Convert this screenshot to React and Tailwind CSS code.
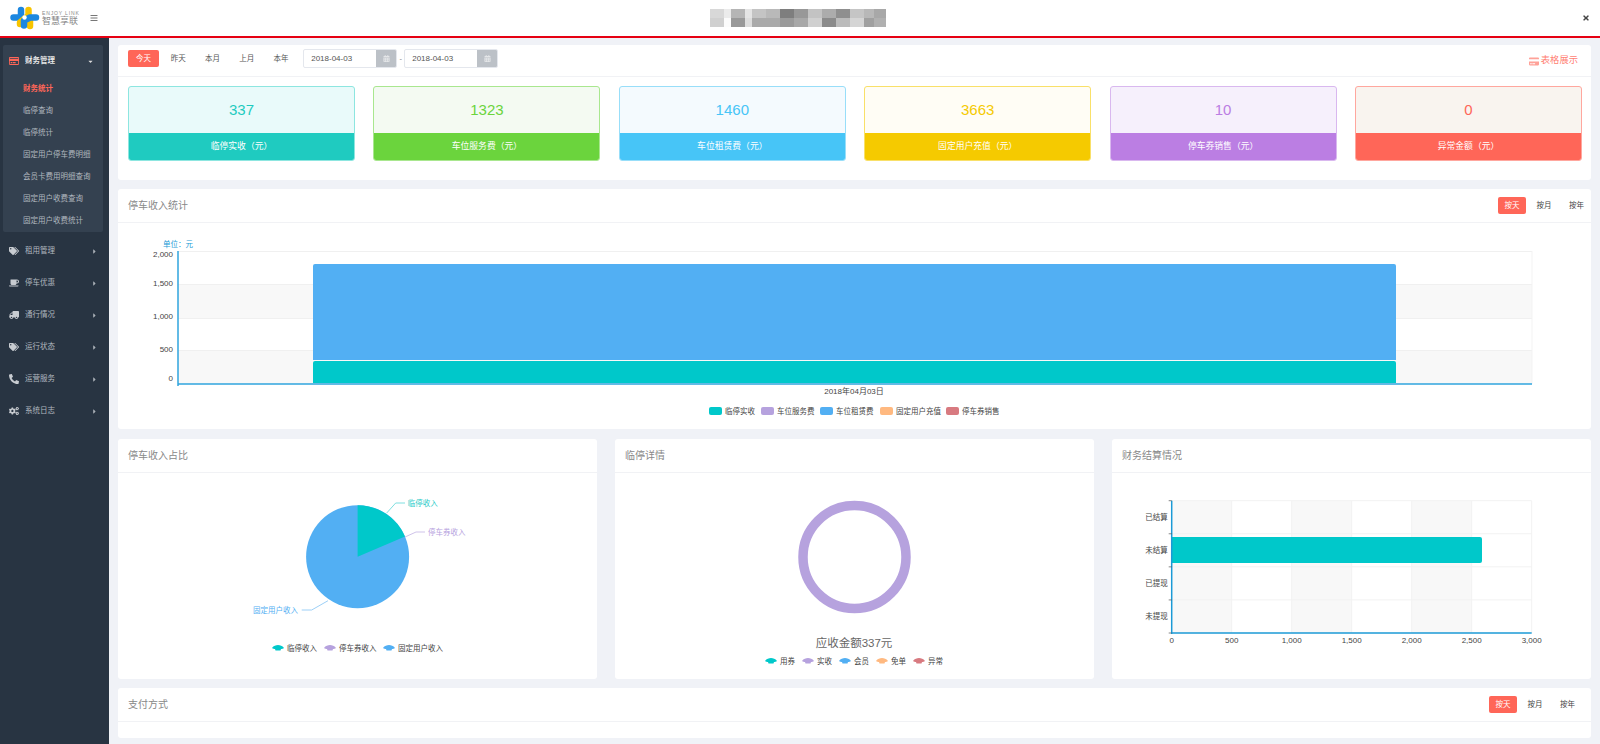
import React from "react";
import { FaRegCreditCard, FaCreditCard, FaTags, FaCoffee, FaTruck, FaPhoneAlt, FaCogs, FaCaretDown, FaCaretRight, FaBars, FaTimes, FaCalendarAlt } from "react-icons/fa";

const font = { fontFamily: '"Liberation Sans","Noto Sans CJK SC",sans-serif' };
const ff = '"Liberation Sans","Noto Sans CJK SC",sans-serif';

function Logo() {
  return (
    <svg width="30" height="24" viewBox="0 0 30 24" className="shrink-0">
      <g fill="none" strokeLinecap="round" strokeLinejoin="round" strokeWidth="6.5">
        <path d="M3.5 11.5H11V4" stroke="#1c87e0" />
        <path d="M18.5 4V9.5L10 16.5V18" stroke="#f7c400" />
        <path d="M20 13V20" stroke="#f7c400" />
        <path d="M14 19.5V14.5L20 11.5H26" stroke="#1c87e0" />
      </g>
      <circle cx="14.5" cy="11.5" r="2.2" fill="#ffffff" />
    </svg>
  );
}

const blurCells = [
  [0,0,"#d8d8d8"],[14,0,"#ebebeb"],[0,1,"#d0d0d0"],[14,1,"#fbfbfb"],[21,0,"#b5b5b5"],[21,1,"#999999"],[35,0,"#e4e4e4"],[35,1,"#dddddd"],
  [42,0,"#c4c4c4"],[42,1,"#aaaaaa"],[56,0,"#b9b9b9"],[56,1,"#aaaaaa"],[70,0,"#7e7e7e"],[70,1,"#9a9a9a"],[84,0,"#989898"],[84,1,"#a8a8a8"],
  [98,0,"#c3c3c3"],[98,1,"#d0d0d0"],[112,0,"#acacac"],[112,1,"#8b8b8b"],[126,0,"#8f8f8f"],[126,1,"#bbbbbb"],[140,0,"#c5c5c5"],[140,1,"#d5d5d5"],
  [154,0,"#b8b8b8"],[154,1,"#a0a0a0"],[164,0,"#a8a8a8"],[164,1,"#b0b0b0"],
];

function Header() {
  return (
    <header className="h-[38px] shrink-0 bg-white border-b-2 border-[#e60012] flex items-center justify-between pl-[10px] pr-[10px]">
      <div className="flex items-center w-[200px]">
        <Logo />
        <div className="ml-[2px] w-[38px] flex flex-col leading-none">
          <span className="text-[5px] tracking-[0.85px] whitespace-nowrap text-[#888888]">ENJOY LINK</span>
          <span className="text-[9px] mt-[1px] text-[#888888]">智慧享联</span>
        </div>
        <FaBars className="ml-[10px] text-[#777777]" size={8} />
      </div>
      <svg width="176" height="18" viewBox="0 0 176 18" className="shrink-0 -ml-[4px]">
        {blurCells.map(([x, r, c], i) => (
          <rect key={i} x={x} y={r * 9} width="14" height="9" fill={c} />
        ))}
      </svg>
      <div className="w-[200px] flex justify-end">
        <FaTimes className="text-[#444444]" size={8} />
      </div>
    </header>
  );
}

const subItems = ["财务统计", "临停查询", "临停统计", "固定用户停车费明细", "会员卡费用明细查询", "固定用户收费查询", "固定用户收费统计"];
const menu = [
  ["租用管理", FaTags, ""],
  ["停车优惠", FaCoffee, ""],
  ["通行情况", FaTruck, "-scale-x-100"],
  ["运行状态", FaTags, ""],
  ["运营服务", FaPhoneAlt, ""],
  ["系统日志", FaCogs, ""],
];

function Sidebar() {
  return (
    <aside className="w-[109px] shrink-0 bg-[#283442] pt-[7px] px-[3px]">
      <div className="bg-[#344150] rounded-[2px] w-[100px] h-[187px] pt-[4px]">
        <div className="h-[22px] mt-[1px] flex items-center pl-[6px] pr-[9px] text-white text-[7.5px]">
          <FaRegCreditCard className="text-[#ff6658] w-[10px] h-[10px]" />
          <span className="ml-[6px] font-bold text-[#e6e6e6]">财务管理</span>
          <FaCaretDown className="ml-auto text-[#dddddd]" size={7} />
        </div>
        <div className="mt-[6px]">
          {subItems.map((t, i) => (
            <div key={t} className={`h-[22px] flex items-center pl-[20px] text-[7.5px] ${i === 0 ? "text-[#ff6658] font-bold" : "text-[#b0b7bf]"}`}>
              {t}
            </div>
          ))}
        </div>
      </div>
      <div className="mt-[3px]">
        {menu.map(([t, Icon, cls]) => (
          <div key={t} className="h-[32px] flex items-center pl-[6px] pr-[8px] text-[7.5px] text-[#b0b7bf]">
            <Icon className={`w-[10px] h-[10px] text-[#c8ccd1] ${cls}`} />
            <span className="ml-[6px]">{t}</span>
            <FaCaretRight className="ml-auto text-[#aab0b7]" size={7} />
          </div>
        ))}
      </div>
    </aside>
  );
}

const stats = [
  ["337", "临停实收（元）", "text-[#1fcbc0]", "bg-[#e9fafa]", "bg-[#1fcbc0]", "border-[#8de6e0]"],
  ["1323", "车位服务费（元）", "text-[#6bd43d]", "bg-[#f4faf2]", "bg-[#6bd43d]", "border-[#a9e78f]"],
  ["1460", "车位租赁费（元）", "text-[#47c5f7]", "bg-[#f4fafe]", "bg-[#47c5f7]", "border-[#98def9]"],
  ["3663", "固定用户充值（元）", "text-[#f5ca00]", "bg-[#fffdf5]", "bg-[#f5ca00]", "border-[#f9e069]"],
  ["10", "停车券销售（元）", "text-[#bb7ee3]", "bg-[#f6f0fc]", "bg-[#bb7ee3]", "border-[#d9b8ef]"],
  ["0", "异常金额（元）", "text-[#ff6658]", "bg-[#f9f4ef]", "bg-[#ff6658]", "border-[#ffa79e]"],
];

function DateInput() {
  return (
    <div className="w-[94px] h-[19px] flex rounded-[2px] border border-[#e4e7ed] bg-white overflow-hidden">
      <span className="flex-1 text-[8px] text-[#555555] flex items-center pl-[7px]">2018-04-03</span>
      <span className="w-[20px] bg-[#bcc1c7] flex items-center justify-center">
        <FaCalendarAlt className="text-[#e4e6e8]" size={7} />
      </span>
    </div>
  );
}

function TopCard() {
  return (
    <section className="bg-white rounded-[3px] h-[135px] shrink-0">
      <div className="h-[32px] border-b border-[#f1f2f5] flex items-center pl-[10px] pr-[13px]">
        <div className="flex items-center mb-[4px]">
          <span className="w-[31px] h-[17px] rounded-[2px] bg-[#ff6658] text-white text-[7.5px] flex items-center justify-center">今天</span>
          <div className="flex ml-[2px]">
            {["昨天", "本月", "上月", "本年"].map((t) => (
              <span key={t} className="w-[34.3px] text-center text-[7.5px] text-[#555555]">{t}</span>
            ))}
          </div>
          <span className="ml-[5px]"><DateInput /></span>
          <span className="w-[7px] text-center text-[7.5px] text-[#888888]">-</span>
          <DateInput />
        </div>
        <span className="ml-auto flex items-center text-[9.3px] text-[#ff7f74] mt-[1px]">
          <FaCreditCard className="mr-[2px] w-[10px] h-[9px] text-[#ffa198]" />
          表格展示
        </span>
      </div>
      <div className="grid grid-cols-6 gap-x-[18.4px] pl-[10px] pr-[9px] pt-[9px]">
        {stats.map(([v, l, tc, bg, bar, bd]) => (
          <div key={l} className={`h-[75px] rounded-[3px] border overflow-hidden flex flex-col ${bd} ${bg}`}>
            <div className={`flex-1 flex items-center justify-center text-[15px] ${tc}`}>{v}</div>
            <div className={`h-[27px] flex items-center justify-center text-white text-[8.8px] ${bar}`}>{l}</div>
          </div>
        ))}
      </div>
    </section>
  );
}

function RangeBtns() {
  return (
    <div className="flex items-center">
      <span className="w-[28px] h-[17px] rounded-[2px] bg-[#ff6658] text-white text-[7.5px] flex items-center justify-center">按天</span>
      <span className="w-[36px] text-center text-[7.5px] text-[#444444]">按月</span>
      <span className="w-[29px] text-center text-[7.5px] text-[#444444]">按年</span>
    </div>
  );
}

function PanelHead({ title, children, pr = "pr-0" }) {
  return (
    <div className={`h-[34px] shrink-0 border-b border-[#f1f2f5] flex items-center justify-between pl-[10px] ${pr}`}>
      <span className="text-[10px] text-[#888888]">{title}</span>
      {children}
    </div>
  );
}

const T = ({ x, y, a = "middle", s = 8, c = "#444444", children }) => (
  <text x={x} y={y} textAnchor={a} fontSize={s} fill={c} fontFamily={ff}>{children}</text>
);

function MainChart() {
  const X = (x) => x - 118;
  const Y = (y) => y - 223;
  const L = X(178), R = X(1532);
  const grid = [251, 284, 318, 350];
  const ticks = [["2,000", 257], ["1,500", 286], ["1,000", 319], ["500", 352], ["0", 381]];
  const legend = [["临停实收", "#00c8ca", 709], ["车位服务费", "#b6a2de", 761], ["车位租赁费", "#52aff3", 820], ["固定用户充值", "#ffb980", 880], ["停车券销售", "#d87a80", 946]];
  return (
    <svg width="1473" height="206" viewBox="0 0 1473 206" className="block">
      <rect x={L} y={Y(284)} width={R - L} height="34" fill="#f8f8f8" />
      <rect x={L} y={Y(350)} width={R - L} height="34" fill="#f8f8f8" />
      {grid.map((y) => <line key={y} x1={L} x2={R} y1={Y(y) + 0.5} y2={Y(y) + 0.5} stroke="#f0f0f0" />)}
      <line x1={R} x2={R} y1={Y(251)} y2={Y(384)} stroke="#f3f3f3" />
      <path d={`M${X(313)} ${Y(360)}V${Y(266)}a2 2 0 0 1 2 -2H${X(1394)}a2 2 0 0 1 2 2V${Y(360)}z`} fill="#52aff3" />
      <path d={`M${X(313)} ${Y(383)}V${Y(363)}a2 2 0 0 1 2 -2H${X(1394)}a2 2 0 0 1 2 2V${Y(383)}z`} fill="#00c8ca" />
      <line x1={L} x2={L} y1={Y(251)} y2={Y(386)} stroke="#2fa5de" strokeWidth="1.5" />
      <line x1={L} x2={R} y1={Y(384)} y2={Y(384)} stroke="#2fa5de" strokeWidth="1.5" />
      {ticks.map(([v, y]) => (
        <T key={v} x={X(173)} y={Y(y)} a="end" s="8">{v}</T>
      ))}
      <T x={X(163)} y={Y(247)} a="start" s="7.5" c="#1b9ad6">单位：元</T>
      <T x={X(854)} y={Y(394)} s="8">2018年04月03日</T>
      {legend.map(([t, c, x]) => (
        <g key={t}>
          <rect x={X(x)} y={Y(407)} width="13" height="8" rx="2" fill={c} />
          <T x={X(x + 16)} y={Y(414)} a="start" s="7.5">{t}</T>
        </g>
      ))}
    </svg>
  );
}

function Blob({ x, y, c }) {
  return (
    <path transform={`translate(${x} ${y})`} d="M0 3C1.5 .8 4 0 6 0s4.5 .8 6 3c-1 .8-2 1-3 1l-.5 1.5h-5L3 4C2 4 1 3.8 0 3z" fill={c} />
  );
}

function PieChart() {
  const cx = 239.6, cy = 83.7, r = 51.5;
  const a = (67 * Math.PI) / 180;
  const ex = cx + r * Math.sin(a), ey = cy - r * Math.cos(a);
  return (
    <svg width="479" height="206" viewBox="0 0 479 206" className="block">
      <circle cx={cx} cy={cy} r={r} fill="#52aff3" />
      <path d={`M${cx} ${cy}V${cy - r}A${r} ${r} 0 0 1 ${ex} ${ey}z`} fill="#00c8ca" />
      <path d="M268.7 40L277.7 30H287" fill="none" stroke="#7fdfe0" />
      <path d="M287 64L298 59H307" fill="none" stroke="#cfc3ea" />
      <path d="M210 127.7L193.7 137H183.7" fill="none" stroke="#9dd0f7" />
      <T x={289.7} y={33} a="start" s="7.5" c="#1fcbc8">临停收入</T>
      <T x={310} y={62} a="start" s="7.5" c="#b6a2de">停车券收入</T>
      <T x={135} y={140} a="start" s="7.5" c="#52aff3">固定用户收入</T>
      <Blob x={154} y={172} c="#00c8ca" />
      <T x={169} y={178} a="start" s="7.5">临停收入</T>
      <Blob x={206} y={172} c="#b6a2de" />
      <T x={221} y={178} a="start" s="7.5">停车券收入</T>
      <Blob x={265} y={172} c="#52aff3" />
      <T x={280} y={178} a="start" s="7.5">固定用户收入</T>
    </svg>
  );
}

function DonutChart() {
  const items = [["用券", "#00c8ca", 150], ["实收", "#b6a2de", 187], ["会员", "#52aff3", 224], ["免单", "#ffb980", 261], ["异常", "#d87a80", 298]];
  return (
    <svg width="478" height="206" viewBox="0 0 478 206" className="block">
      <circle cx="239.5" cy="84" r="51.5" fill="none" stroke="#b6a2de" strokeWidth="9.5" />
      <T x={239} y={174} s="11.5" c="#666666">应收金额337元</T>
      {items.map(([t, c, x]) => (
        <g key={t}>
          <Blob x={x} y={185} c={c} />
          <T x={x + 15} y={191} a="start" s="7.5">{t}</T>
        </g>
      ))}
    </svg>
  );
}

function BarChart() {
  const L = 59.7, R = 419.7, Tp = 27.7, B = 160;
  const step = (R - L) / 6, row = (B - Tp) / 4;
  return (
    <svg width="479" height="206" viewBox="0 0 479 206" className="block">
      {[0, 2, 4].map((i) => <rect key={i} x={L + i * step} y={Tp} width={step} height={B - Tp} fill="#f8f8f8" />)}
      {[0, 1, 2, 3, 4, 5, 6].map((i) => <line key={i} x1={L + i * step} x2={L + i * step} y1={Tp} y2={B} stroke="#f2f2f2" />)}
      {[0, 1, 2, 3].map((i) => <line key={i} x1={L} x2={R} y1={Tp + i * row} y2={Tp + i * row} stroke="#f2f2f2" />)}
      <path d={`M${L} 64H368a2 2 0 0 1 2 2V88a2 2 0 0 1 -2 2H${L}z`} fill="#00c8ca" />
      <line x1={L} x2={L} y1={Tp} y2={B + 1} stroke="#1b9ad6" strokeWidth="1.5" />
      <line x1={L} x2={R} y1={B} y2={B} stroke="#1b9ad6" strokeWidth="1.5" />
      {[0, 1, 2, 3, 4].map((i) => <line key={i} x1={L - 3} x2={L} y1={Tp + i * row} y2={Tp + i * row} stroke="#555555" strokeWidth=".7" />)}
      {["已结算", "未结算", "已提现", "未提现"].map((t, i) => (
        <T key={t} x={L - 4} y={Tp + (i + 0.5) * row + 3} a="end" s="7.5">{t}</T>
      ))}
      {["0", "500", "1,000", "1,500", "2,000", "2,500", "3,000"].map((v, i) => (
        <T key={v} x={L + i * step} y={B + 10} s="8">{v}</T>
      ))}
    </svg>
  );
}

export default function App() {
  return (
    <div className="w-[1600px] h-[744px] overflow-hidden flex flex-col bg-[#f0f2f7]" style={font}>
      <Header />
      <div className="flex flex-1 min-h-0">
        <Sidebar />
        <main className="flex-1 min-w-0 pt-[7px] pl-[9px] pr-[9px] flex flex-col">
          <TopCard />
          <section className="bg-white rounded-[3px] h-[240px] shrink-0 flex flex-col mt-[9px]">
            <PanelHead title="停车收入统计"><RangeBtns /></PanelHead>
            <MainChart />
          </section>
          <div className="grid grid-cols-3 gap-x-[18px] h-[240px] shrink-0 mt-[10px]">
            <section className="bg-white rounded-[3px] flex flex-col"><PanelHead title="停车收入占比" /><PieChart /></section>
            <section className="bg-white rounded-[3px] flex flex-col"><PanelHead title="临停详情" /><DonutChart /></section>
            <section className="bg-white rounded-[3px] flex flex-col"><PanelHead title="财务结算情况" /><BarChart /></section>
          </div>
          <section className="bg-white rounded-[3px] h-[50px] shrink-0 mt-[9px]">
            <PanelHead title="支付方式" pr="pr-[9px]"><RangeBtns /></PanelHead>
          </section>
        </main>
      </div>
    </div>
  );
}
